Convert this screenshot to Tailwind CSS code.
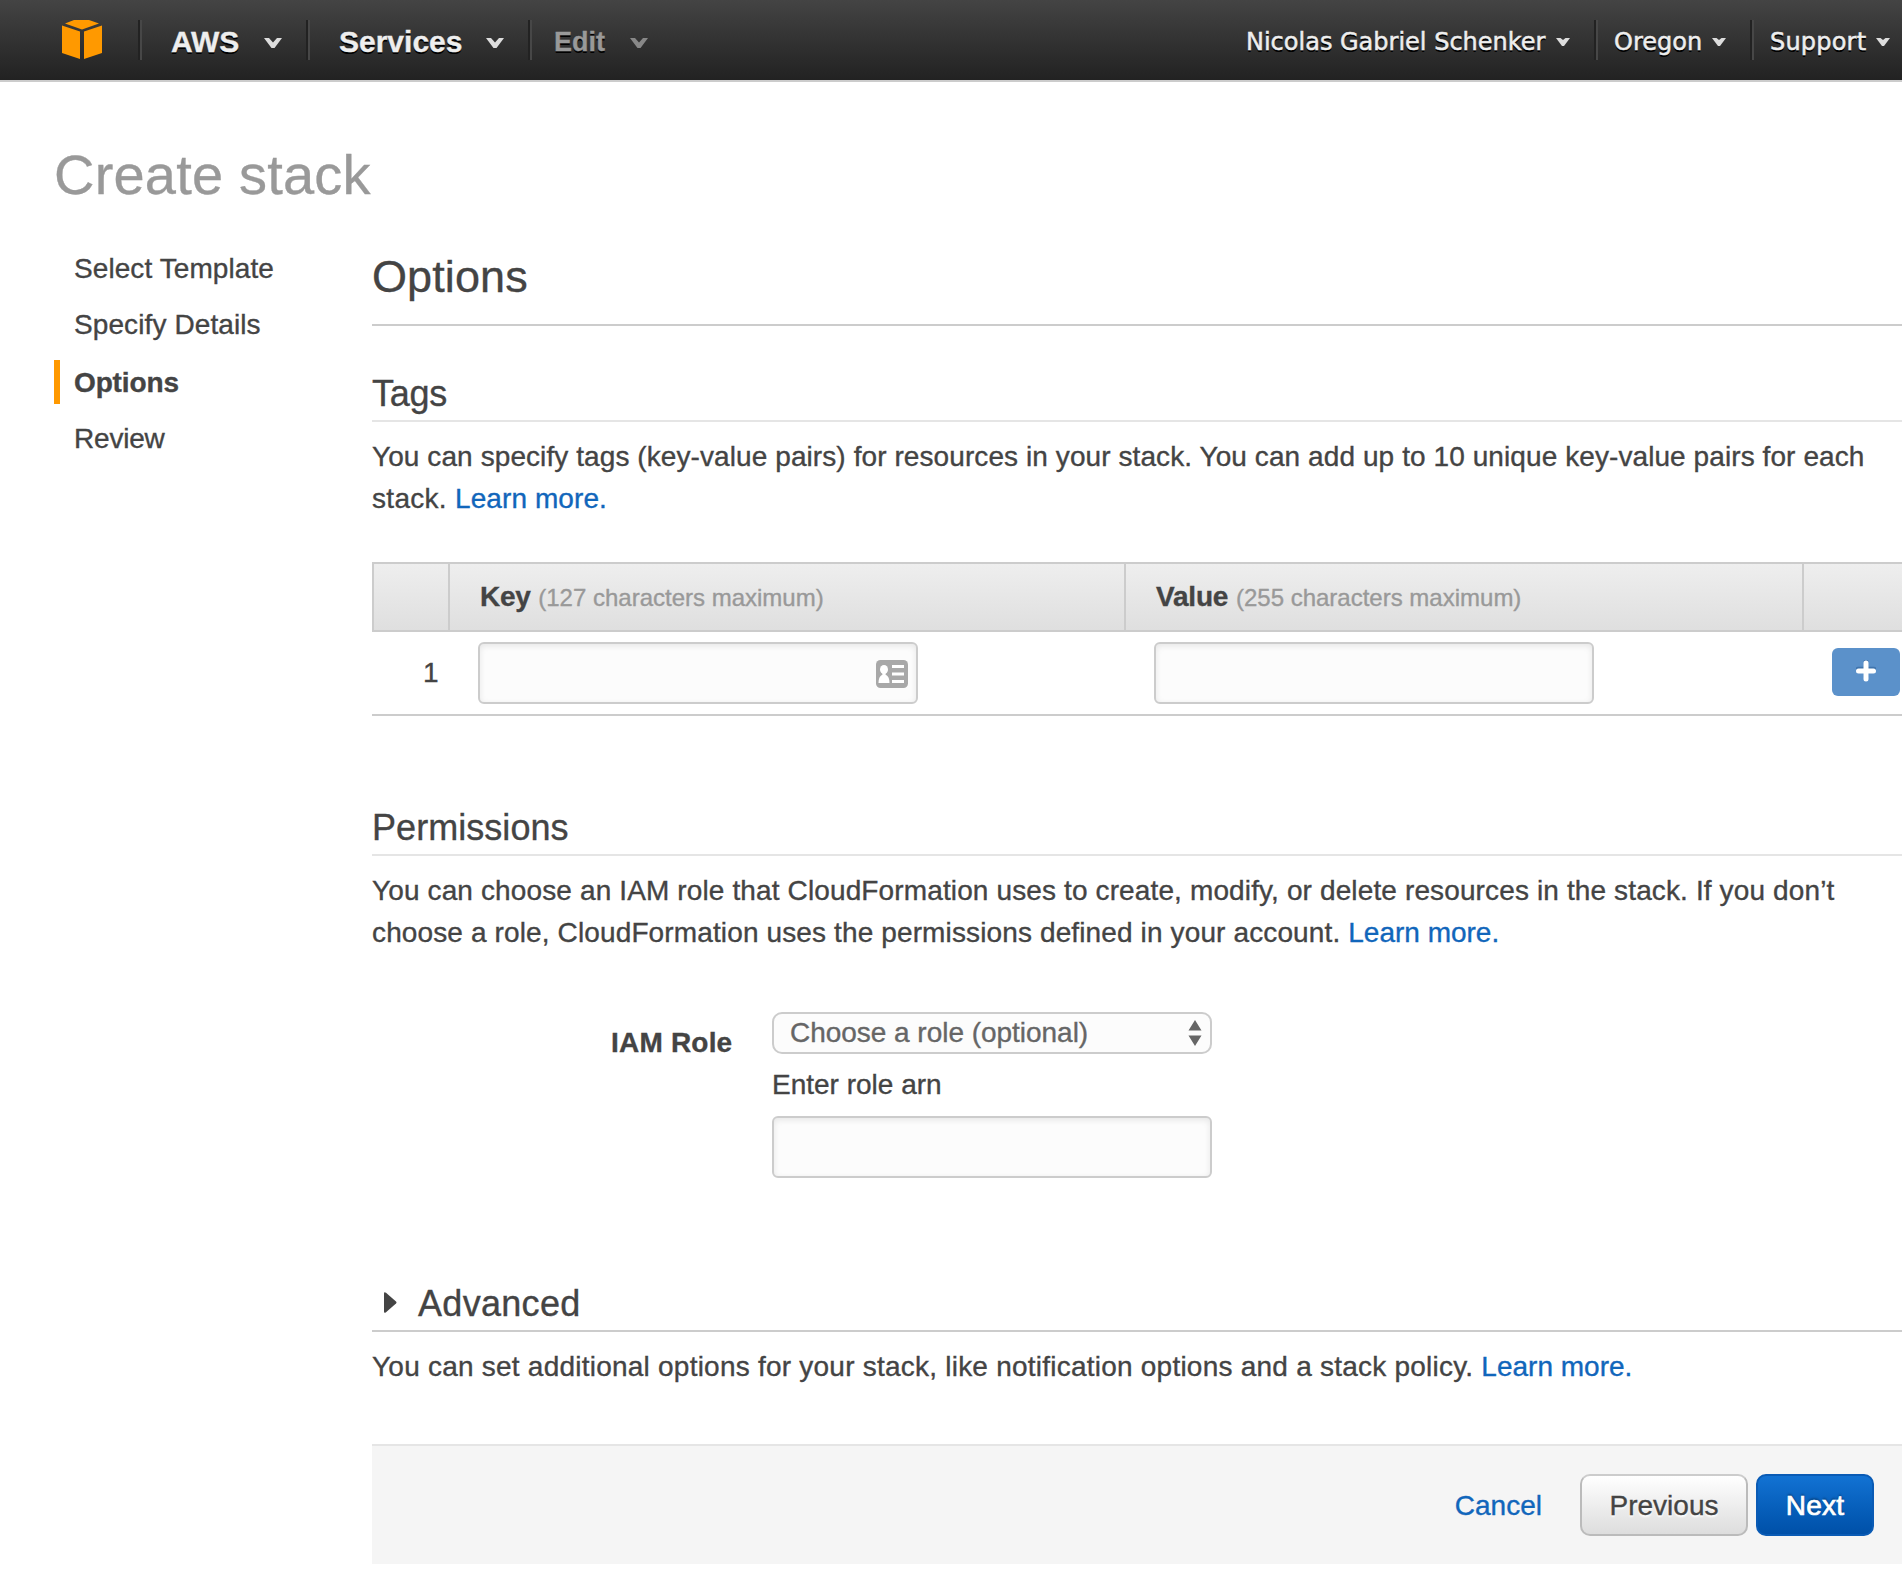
<!DOCTYPE html>
<html lang="en">
<head>
<meta charset="utf-8">
<title>Create stack</title>
<script src="https://cdn.jsdelivr.net/npm/@tailwindcss/browser@4"></script>
</head>
<body class="bg-white w-[1902px] h-[1580px] overflow-hidden font-['Liberation_Sans',Arial,sans-serif] text-[28px] leading-[42px] text-[#444] whitespace-nowrap [-webkit-text-stroke:0.35px_currentColor]">

<header class="flex items-start h-[82px] border-b-2 border-[#ccc] bg-gradient-to-b from-[#444] to-[#222] font-bold text-[30px] leading-[83px] text-[#eee] [text-shadow:0_2px_0_#000]">
  <svg class="ml-[62px] mt-5 w-10 h-10 shrink-0" viewBox="0 0 40 40" fill="#f90">
    <path d="M12 0H27L37 3.500L20 9.500L3 3.500Z"/>
    <path d="M0 5.500L18 11.500V39L0 33Z"/>
    <path d="M40 5.500L22 11.500V39L40 33Z"/>
  </svg>
  <i class="ml-9 mt-5 w-1 h-10 shrink-0 border-l-2 border-r-2 border-l-[#222] border-r-[#474747]"></i>
  <div class="flex w-[164px] pl-[29px]"><span class="w-[93px]">AWS</span>
    <svg class="mt-[38px] w-[18px] h-[11px]" viewBox="0 0 18 11" fill="#ddd"><path d="M0 0H5L9 4.500L13 0H18L10.500 10H7.500Z"/></svg></div>
  <i class="mt-5 w-1 h-10 shrink-0 border-l-2 border-r-2 border-l-[#222] border-r-[#474747]"></i>
  <div class="flex w-[218px] pl-[29px]"><span class="w-[147px]">Services</span>
    <svg class="mt-[38px] w-[18px] h-[11px]" viewBox="0 0 18 11" fill="#ddd"><path d="M0 0H5L9 4.500L13 0H18L10.500 10H7.500Z"/></svg></div>
  <i class="mt-5 w-1 h-10 shrink-0 border-l-2 border-r-2 border-l-[#222] border-r-[#474747]"></i>
  <div class="flex pl-[22px] text-[#999] text-[27px] leading-[85px] h-20"><span class="w-[76px]">Edit</span>
    <svg class="mt-[38px] w-[18px] h-[11px]" viewBox="0 0 18 11" fill="#888"><path d="M0 0H5L9 4.500L13 0H18L10.500 10H7.500Z"/></svg></div>
  <div class="ml-auto flex items-start font-normal text-2xl leading-[84px] h-20 font-['DejaVu_Sans',Verdana,sans-serif] [-webkit-text-stroke:0.5px_currentColor]">
    <div class="flex w-[348px]"><span class="w-[310px]">Nicolas Gabriel Schenker</span>
      <svg class="mt-[38px] w-[14px] h-[8px]" viewBox="0 0 14 8" fill="#ddd"><path d="M0 0H4.500L7 2L9.500 0H14L8 8H6Z"/></svg></div>
    <i class="mt-5 w-1 h-10 shrink-0 border-l-2 border-r-2 border-l-[#222] border-r-[#474747]"></i>
    <div class="flex w-[152px] pl-4"><span class="w-[98px]">Oregon</span>
      <svg class="mt-[38px] w-[14px] h-[8px]" viewBox="0 0 14 8" fill="#ddd"><path d="M0 0H4.500L7 2L9.500 0H14L8 8H6Z"/></svg></div>
    <i class="mt-5 w-1 h-10 shrink-0 border-l-2 border-r-2 border-l-[#222] border-r-[#474747]"></i>
    <div class="flex w-[148px] pl-4"><span class="w-[106px] tracking-[0.2px]">Support</span>
      <svg class="mt-[38px] w-[14px] h-[8px]" viewBox="0 0 14 8" fill="#ddd"><path d="M0 0H4.500L7 2L9.500 0H14L8 8H6Z"/></svg></div>
  </div>
</header>

<h1 class="pt-[63px] pl-[54px] text-[56px] leading-[60px] tracking-[0.2px] text-[#999]">Create stack</h1>

<div class="flex mt-[47px] pl-[54px]">
  <nav class="w-[318px] shrink-0 leading-[44px] -mt-[5px]">
    <div class="pl-5 tracking-[0.08px]">Select Template</div>
    <div class="pl-5 mt-[12px] tracking-[0.1px]">Specify Details</div>
    <div class="pl-[14px] mt-[13px] h-11 leading-[46px] border-l-6 border-[#f90] font-bold tracking-[-0.13px]">Options</div>
    <div class="pl-5 mt-[13px] tracking-[-0.2px]">Review</div>
  </nav>

  <main class="w-[1530px] shrink-0">
    <h2 class="pb-[22px] border-b-2 border-[#ccc] text-[45px] leading-[50px] tracking-[0.1px]">Options</h2>

    <h3 class="mt-[47px] pb-[6px] border-b-2 border-[#e5e5e5] text-[36px] leading-[41px] tracking-[-0.3px]">Tags</h3>
    <p class="mt-[14px] tracking-[0.085px]">You can specify tags (key-value pairs) for resources in your stack. You can add up to 10 unique key-value pairs for each<br><span class="tracking-[0.3px]">stack. </span><a class="text-[#1166bb]">Learn more.</a></p>

    <div class="mt-[42px] flex h-[70px] border-2 border-r-0 border-[#ccc] bg-gradient-to-b from-[#eee] to-[#dfdfdf] leading-[66px]">
      <div class="w-[76px] border-r-2 border-[#ccc]"></div>
      <div class="w-[676px] pl-[30px] border-r-2 border-[#ccc]"><b class="tracking-[-0.3px]">Key</b> <span class="text-2xl leading-[66px] text-[#999]">(127 characters maximum)</span></div>
      <div class="w-[678px] pl-[30px] border-r-2 border-[#ccc]"><b class="tracking-[-0.2px]">Value</b> <span class="text-2xl leading-[66px] text-[#999]">(255 characters maximum)</span></div>
    </div>
    <div class="flex items-start h-[84px] pt-[10px] border-b-2 border-[#ccc]">
      <div class="w-[106px] pl-[51px] leading-[61px]">1</div>
      <div class="w-[440px] h-[62px] flex justify-end items-start rounded-md border-2 border-[#ccc] bg-[#fcfcfc] shadow-[inset_0_2px_6px_rgba(0,0,0,0.09)] pt-4 pr-2">
        <svg class="w-8 h-7" viewBox="0 0 32 28">
          <rect width="32" height="28" rx="4.500" fill="#a8a8a8"/>
          <ellipse cx="8" cy="9.500" rx="4" ry="4.500" fill="#fff"/>
          <path d="M6.500 12H9.500V14.500C12.500 16 13.500 19 13.500 23H2.500C2.500 19 3.500 16 6.500 14.500ZM16 5H28V8H16ZM16 12.500H28V15.500H16ZM16 20H28V23H16Z" fill="#fff"/>
        </svg>
      </div>
      <div class="ml-[236px] w-[440px] h-[62px] rounded-md border-2 border-[#ccc] bg-[#fcfcfc] shadow-[inset_0_2px_6px_rgba(0,0,0,0.09)]"></div>
      <div class="ml-[238px] mt-[6px] w-[68px] h-12 pt-[12px] rounded-md bg-[#5b91ca]">
        <svg class="mx-auto w-5 h-[22px]" viewBox="0 0 20 22"><path d="M10 2V18M2 10H18" stroke="#3f74ad" stroke-width="4.500" stroke-linecap="round" transform="translate(0,-1)"/><path d="M10 3V19M2.500 11H17.500" stroke="#fff" stroke-width="5" stroke-linecap="round"/></svg>
      </div>
    </div>

    <h3 class="mt-[91px] pb-[6px] border-b-2 border-[#e5e5e5] text-[36px] leading-[41px] tracking-[0.05px]">Permissions</h3>
    <p class="mt-[14px] tracking-[0.128px]">You can choose an IAM role that CloudFormation uses to create, modify, or delete resources in the stack. If you don’t<br>choose a role, CloudFormation uses the permissions defined in your account. <a class="tracking-[0px] text-[#1166bb]">Learn more.</a></p>

    <div class="flex mt-[58px]">
      <div class="w-[400px] pl-[239px] pt-[10px] font-bold leading-[41px] tracking-[0.2px]">IAM Role</div>
      <div class="w-[440px] leading-[37px]">
        <div class="flex justify-between h-[42px] pl-4 pr-2 rounded-[10px] border-2 border-[#ccc] bg-[#fcfcfc] text-[#666]">
          <span class="tracking-[-0.03px]">Choose a role (optional)</span>
          <svg class="mt-[6px] w-[14px] h-[26px]" viewBox="0 0 14 26" fill="#666"><path d="M7 0L13.500 10.500H0.500ZM7 26L13.500 15.500H0.500Z"/></svg>
        </div>
        <div class="mt-3">Enter role arn</div>
        <div class="mt-[13px] h-[62px] rounded-md border-2 border-[#ccc] bg-[#fcfcfc] shadow-[inset_0_2px_6px_rgba(0,0,0,0.09)]"></div>
      </div>
    </div>

    <h3 class="mt-[105px] pb-[6px] flex border-b-2 border-[#ccc] text-[36px] leading-[41px] tracking-[0.3px]">
      <svg class="ml-[12px] mr-[21px] mt-[9px] w-[13px] h-[21px]" viewBox="0 0 13 21" fill="#444"><path d="M0 1.500Q0 -0.500 2 0.800L12 9.500Q13 10.500 12 11.500L2 20.200Q0 21.500 0 19.500Z"/></svg>
      Advanced</h3>
    <p class="mt-[14px] tracking-[0.23px]">You can set additional options for your stack, like notification options and a stack policy. <a class="tracking-[0px] text-[#1166bb]">Learn more.</a></p>

    <footer class="flex items-start justify-end mt-[56px] h-[120px] pt-7 pr-7 border-t-2 border-[#e5e5e5] bg-[#f5f5f5] leading-[59px]">
      <a class="mr-[38px] leading-[64px] text-[#1166bb]">Cancel</a>
      <div class="w-[168px] h-[62px] rounded-[10px] border-2 border-[#bbb] border-t-[#ccc] bg-gradient-to-b from-white to-[#ddd] text-center leading-[60px] [text-shadow:0_2px_2px_#fff]">Previous</div>
      <div class="ml-2 w-[118px] h-[62px] rounded-[10px] border-2 border-[#0a5bb5] bg-gradient-to-b from-[#1272d3] to-[#0050a8] text-center text-white leading-[60px] tracking-[0.2px] [text-shadow:0_-2px_2px_rgba(0,0,0,0.3)] [-webkit-text-stroke:0.7px_white]">Next</div>
    </footer>
  </main>
</div>
</body>
</html>
